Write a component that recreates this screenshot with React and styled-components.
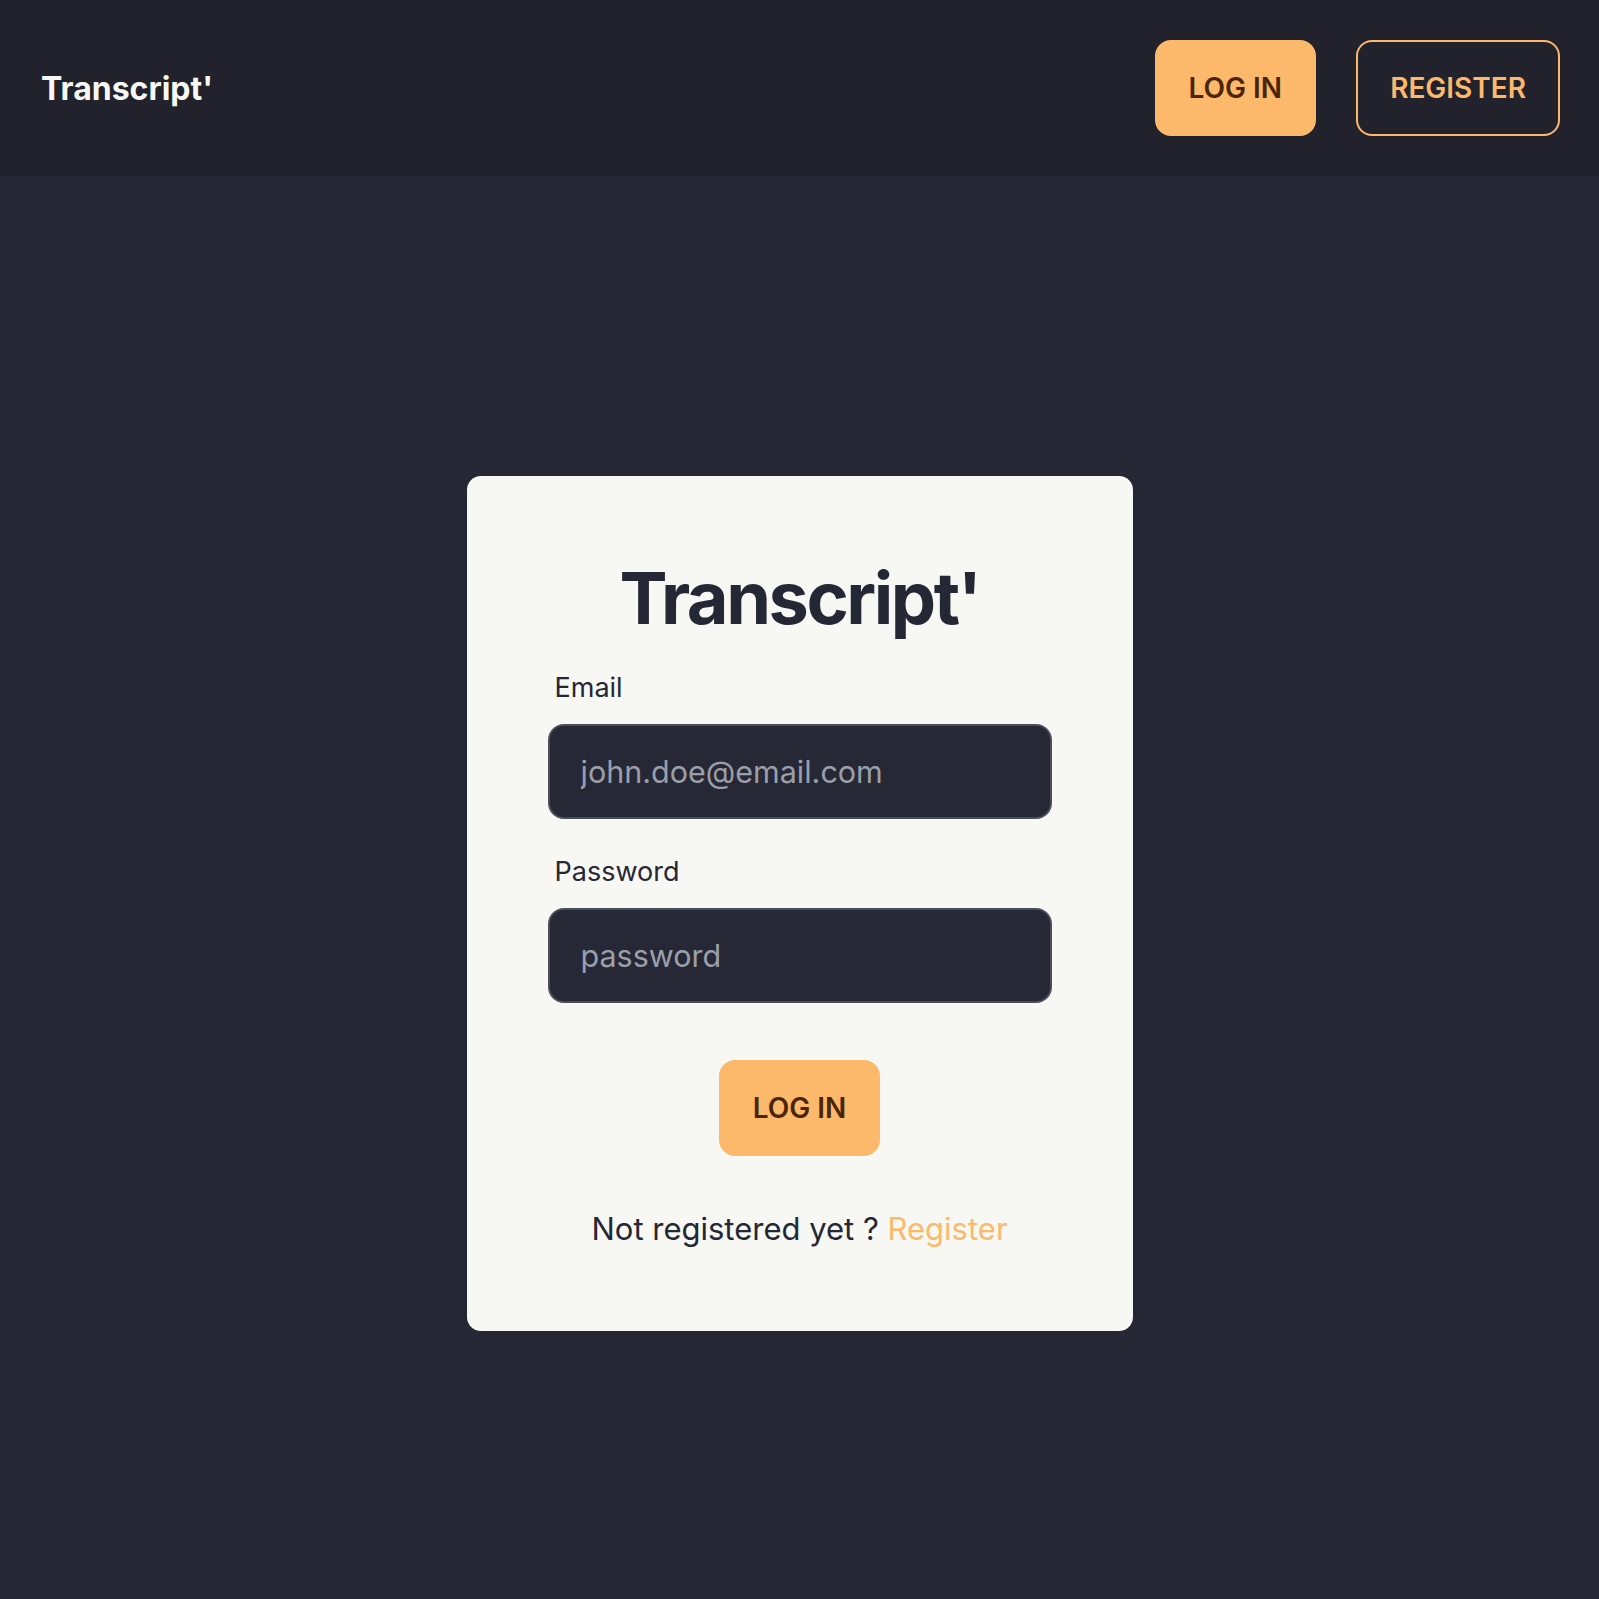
import React from 'react';
import styled, { createGlobalStyle } from 'styled-components';

const GlobalStyle = createGlobalStyle`
  * {
    box-sizing: border-box;
  }
  html, body {
    margin: 0;
    padding: 0;
    background-color: #252735;
    font-family: Inter, "Noto Sans", sans-serif;
  }
`;

const Page = styled.div`
  min-height: 1599px;
  background-color: #252735;
`;

const Header = styled.header`
  display: flex;
  align-items: center;
  justify-content: space-between;
  height: 176px;
  padding: 0 39px 0 41px;
  background-color: #22222d;
`;

const Logo = styled.div`
  font-size: 32px;
  font-weight: 700;
  color: #f7f8f3;
`;

const Nav = styled.nav`
  display: flex;
  gap: 40px;
`;

const Button = styled.button`
  display: block;
  padding: 32px 32px;
  border: 2px solid #fdb96b;
  border-radius: 16px;
  background-color: ${(p) => (p.$outline ? 'transparent' : '#fdb96b')};
  color: ${(p) => (p.$outline ? '#fdb96b' : '#4a2508')};
  font-family: Inter, sans-serif;
  font-size: 28px;
  line-height: 28px;
  font-weight: 600;
  text-transform: uppercase;
  cursor: pointer;
`;

const Main = styled.main`
  display: flex;
  justify-content: center;
  padding-top: 300px;
`;

const Card = styled.form`
  display: flex;
  flex-direction: column;
  width: 666px;
  padding: 79px 81px 80px;
  background-color: #f7f8f3;
  border-radius: 14px;
`;

const Title = styled.h1`
  margin: 0 0 27px;
  font-size: 72px;
  line-height: 1.2;
  font-weight: 700;
  letter-spacing: -0.034em;
  text-align: center;
  color: #252735;
`;

const Label = styled.label`
  display: block;
  margin-bottom: 16px;
  padding-left: 7px;
  font-size: 27px;
  line-height: 40px;
  color: #252735;
`;

const Input = styled.input`
  display: block;
  width: 100%;
  height: 95px;
  margin-bottom: ${(p) => p.$gap}px;
  padding: 0 31px;
  border: 2px solid #4b4e5b;
  border-radius: 16px;
  background-color: #262835;
  color: #f7f8f3;
  font-family: Inter, sans-serif;
  font-size: 30.5px;
  outline: none;
  &::placeholder {
    color: #9a9faa;
  }
`;

const Actions = styled.div`
  display: flex;
  justify-content: center;
  margin-bottom: 50px;
`;

const Footer = styled.p`
  margin: 0;
  font-size: 31px;
  line-height: 45px;
  text-align: center;
  color: #252735;
`;

const Link = styled.a`
  color: #fdb96b;
  text-decoration: none;
`;

export default function App() {
  return (
    <Page>
      <GlobalStyle />
      <Header>
        <Logo>Transcript'</Logo>
        <Nav>
          <Button type="button">Log in</Button>
          <Button type="button" $outline>Register</Button>
        </Nav>
      </Header>
      <Main>
        <Card onSubmit={(e) => e.preventDefault()}>
          <Title>Transcript'</Title>
          <Label htmlFor="email">Email</Label>
          <Input id="email" type="email" placeholder="john.doe@email.com" $gap={33} />
          <Label htmlFor="password">Password</Label>
          <Input id="password" type="password" placeholder="password" $gap={57} />
          <Actions>
            <Button type="submit">Log in</Button>
          </Actions>
          <Footer>
            Not registered yet ? <Link href="#">Register</Link>
          </Footer>
        </Card>
      </Main>
    </Page>
  );
}
